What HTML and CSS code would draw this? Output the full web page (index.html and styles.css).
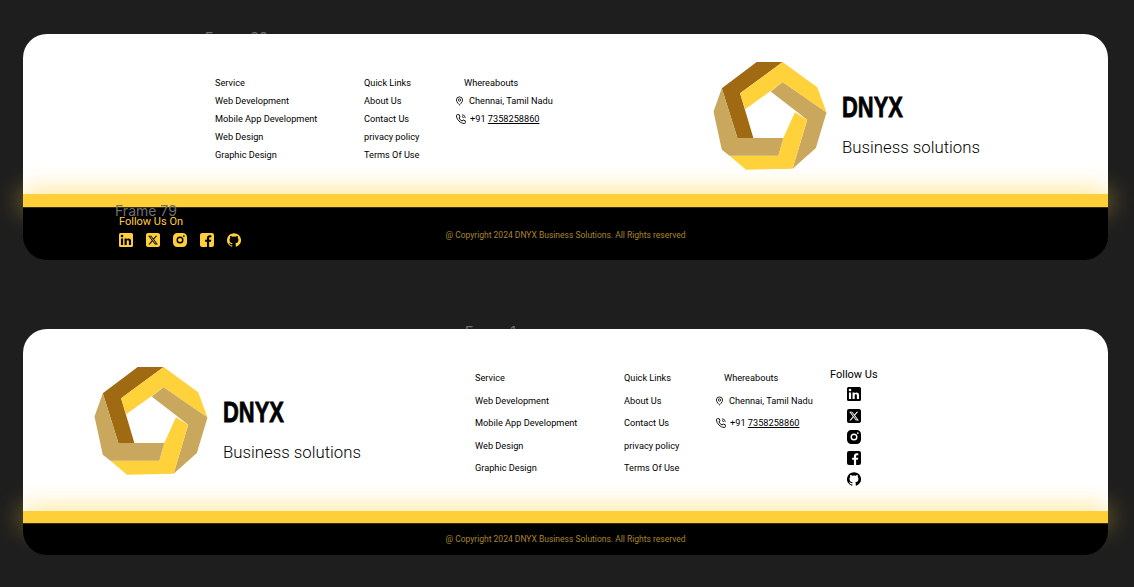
FILE: index.html
```html
<!DOCTYPE html>
<html lang="en">
<head>
    <meta charset="UTF-8">
    <meta name="viewport" content="width=device-width, initial-scale=1.0">
    <title>DNYX Footer Frames</title>
    <link rel="stylesheet" href="styles.css">
</head>
<body>

    <svg class="sprites" width="0" height="0" aria-hidden="true">
        <symbol id="logo" viewBox="30 30 360 340">
            <polygon fill="#a06a12" points="170,36 248,36 120,130 160,265 112,265 65,115"/>
            <polygon fill="#ffd23c" points="248,36 352,112 380,188 248,97 210,125 135,178 120,130"/>
            <polygon fill="#c9a75c" points="248,97 380,188 348,295 278,357 322,210 212,125"/>
            <polygon fill="#ffd23c" points="285,187 322,210 278,357 138,360 88,318 235,318 250,265"/>
            <polygon fill="#c9a75c" points="65,115 112,265 250,265 235,318 88,318 65,300 40,185"/>
        </symbol>
        <symbol id="ico-linkedin" viewBox="3 3 18 18">
            <path d="M19 3a2 2 0 0 1 2 2v14a2 2 0 0 1-2 2H5a2 2 0 0 1-2-2V5a2 2 0 0 1 2-2h14m-.5 15.5v-5.3a3.26 3.26 0 0 0-3.26-3.26c-.85 0-1.84.52-2.32 1.3v-1.11h-2.79v8.37h2.79v-4.93c0-.77.62-1.4 1.39-1.4a1.4 1.4 0 0 1 1.4 1.4v4.93h2.79M6.88 8.56a1.68 1.68 0 0 0 1.68-1.68c0-.93-.75-1.69-1.68-1.69a1.69 1.69 0 0 0-1.69 1.69c0 .93.76 1.68 1.69 1.68m1.39 9.94v-8.37H5.5v8.37h2.77z"/>
        </symbol>
        <symbol id="ico-x" viewBox="0 32 448 448">
            <path d="M64 32C28.7 32 0 60.7 0 96V416c0 35.3 28.7 64 64 64H384c35.3 0 64-28.7 64-64V96c0-35.3-28.7-64-64-64H64zm297.1 84L257.3 234.6 379.4 396H283.8L209 298.1 123.3 396H75.8l111-126.9L69.7 116h98l67.7 89.5L313.6 116h47.5zM323.3 367.6L153.4 142.9H125.1L296.9 367.6h26.3z"/>
        </symbol>
        <symbol id="ico-instagram" viewBox="2 2 20 20">
            <path fill-rule="evenodd" d="M8 2h8a6 6 0 0 1 6 6v8a6 6 0 0 1-6 6H8a6 6 0 0 1-6-6V8a6 6 0 0 1 6-6z M12 7a5 5 0 1 0 0 10 5 5 0 0 0 0-10z M12 9a3 3 0 1 1 0 6 3 3 0 0 1 0-6z M17.5 5.200a1.200 1.200 0 1 0 0 2.400 1.200 1.200 0 0 0 0-2.400z"/>
        </symbol>
        <symbol id="ico-facebook" viewBox="2 2 20 20">
            <path d="M5 2h14a3 3 0 0 1 3 3v14a3 3 0 0 1-3 3h-4v-7.5h2.600l.5-3H15V9.700c0-.9.4-1.600 1.700-1.600h1.500V5.400c-.5-.1-1.400-.2-2.300-.2-2.400 0-4 1.500-4 4.100v2.200H9.300v3h2.600V22H5a3 3 0 0 1-3-3V5a3 3 0 0 1 3-3z"/>
        </symbol>
        <symbol id="ico-github" viewBox="0 0 24 24">
            <path d="M12 .3a12 12 0 0 0-3.8 23.4c.6.1.8-.3.8-.6v-2c-3.3.7-4-1.6-4-1.6-.6-1.4-1.4-1.8-1.4-1.8-1-.7.1-.7.1-.7 1.2 0 1.9 1.2 1.9 1.2 1 1.8 2.8 1.3 3.5 1 0-.8.4-1.3.7-1.6-2.7-.3-5.5-1.3-5.5-6 0-1.2.5-2.3 1.3-3.1-.2-.4-.6-1.6 0-3.2 0 0 1-.3 3.4 1.2a11.5 11.5 0 0 1 6 0c2.3-1.5 3.3-1.2 3.3-1.2.6 1.6.2 2.8 0 3.2.9.8 1.3 1.9 1.3 3.2 0 4.6-2.8 5.6-5.5 5.9.5.4.9 1 .9 2.2v3.3c0 .3.1.7.8.6A12 12 0 0 0 12 .3"/>
        </symbol>
        <symbol id="ico-pin" viewBox="3 1 18 23">
            <path fill="none" stroke="#000" stroke-width="2.200" d="M12 2a8 8 0 0 0-8 8c0 5.500 8 12.500 8 12.500s8-7 8-12.500a8 8 0 0 0-8-8z"/>
            <circle cx="12" cy="10" r="3" fill="none" stroke="#000" stroke-width="2"/>
        </symbol>
        <symbol id="ico-phone" viewBox="1 1 22 22">
            <path fill="none" stroke="#000" stroke-width="2" stroke-linejoin="round" d="M4 2.500h4l2 5-2.500 2a13 13 0 0 0 7 7l2-2.500 5 2v4a2 2 0 0 1-2 2C10.500 21.500 2 13 2 4.500a2 2 0 0 1 2-2z"/>
            <path fill="none" stroke="#000" stroke-width="1.800" d="M14 2.500a8 8 0 0 1 7.500 7.500M14 6.500a4 4 0 0 1 3.500 3.500"/>
        </symbol>
    </svg>

    <!-- logo on the right -->
    <div class="frame frame-one">
        <span class="frame-label label-top">Frame 80</span>
        <div class="frame-main">
            <nav class="links">
                <ul class="col col-service">
                    <li>Service</li>
                    <li>Web Development</li>
                    <li>Mobile App Development</li>
                    <li>Web Design</li>
                    <li>Graphic Design</li>
                </ul>
                <ul class="col col-quick">
                    <li>Quick Links</li>
                    <li>About Us</li>
                    <li>Contact Us</li>
                    <li>privacy policy</li>
                    <li>Terms Of Use</li>
                </ul>
                <ul class="col col-where">
                    <li class="where-title">Whereabouts</li>
                    <li class="where-row"><svg class="pin"><use href="#ico-pin"/></svg>Chennai, Tamil Nadu</li>
                    <li class="where-row"><svg class="phone"><use href="#ico-phone"/></svg><span>+91 <u>7358258860</u></span></li>
                </ul>
            </nav>
            <div class="brand">
                <svg class="logo"><use href="#logo"/></svg>
                <div class="brand-text">
                    <div class="brand-name">DNYX</div>
                    <div class="brand-tag">Business solutions</div>
                </div>
            </div>
        </div>
        <div class="bar"></div>
        <footer class="frame-foot">
            <span class="frame-label label-foot">Frame 79</span>
            <div class="follow-on">
                <p>Follow Us On</p>
                <div class="socials">
                    <svg><use href="#ico-linkedin"/></svg>
                    <svg><use href="#ico-x"/></svg>
                    <svg><use href="#ico-instagram"/></svg>
                    <svg><use href="#ico-facebook"/></svg>
                    <svg><use href="#ico-github"/></svg>
                </div>
            </div>
            <p class="copyright">@ Copyright 2024 DNYX Business Solutions. All Rights reserved</p>
        </footer>
    </div>

    <!-- logo on the left -->
    <div class="frame frame-two">
        <span class="frame-label label-top">Frame 1</span>
        <div class="frame-main">
            <div class="brand">
                <svg class="logo"><use href="#logo"/></svg>
                <div class="brand-text">
                    <div class="brand-name">DNYX</div>
                    <div class="brand-tag">Business solutions</div>
                </div>
            </div>
            <nav class="links">
                <ul class="col col-service">
                    <li>Service</li>
                    <li>Web Development</li>
                    <li>Mobile App Development</li>
                    <li>Web Design</li>
                    <li>Graphic Design</li>
                </ul>
                <ul class="col col-quick">
                    <li>Quick Links</li>
                    <li>About Us</li>
                    <li>Contact Us</li>
                    <li>privacy policy</li>
                    <li>Terms Of Use</li>
                </ul>
                <ul class="col col-where">
                    <li class="where-title">Whereabouts</li>
                    <li class="where-row"><svg class="pin"><use href="#ico-pin"/></svg>Chennai, Tamil Nadu</li>
                    <li class="where-row"><svg class="phone"><use href="#ico-phone"/></svg><span>+91 <u>7358258860</u></span></li>
                </ul>
                <div class="follow-col">
                    <p>Follow Us</p>
                    <svg><use href="#ico-linkedin"/></svg>
                    <svg><use href="#ico-x"/></svg>
                    <svg><use href="#ico-instagram"/></svg>
                    <svg><use href="#ico-facebook"/></svg>
                    <svg><use href="#ico-github"/></svg>
                </div>
            </nav>
        </div>
        <div class="bar"></div>
        <footer class="frame-foot">
            <p class="copyright">@ Copyright 2024 DNYX Business Solutions. All Rights reserved</p>
        </footer>
    </div>

</body>
</html>
```

FILE: styles.css
```css
* {
    box-sizing: border-box;
}

body {
    font-family: Roboto, Lato, sans-serif;
    background-color: #1e1e1e;
    color: #000;
    margin: 0;
    padding: 34px 26px 0 23px;
    height: 587px;
    overflow: hidden;
    display: flex;
    flex-direction: column;
    gap: 69px;
}

p, ul {
    margin: 0;
    padding: 0;
    list-style: none;
}

.sprites {
    position: absolute;
}

.frame {
    position: relative;
    width: 1085px;
}

.frame-label {
    position: absolute;
    font-family: Inter, sans-serif;
    font-size: 14px;
    line-height: 17px;
    color: #6f6f6f;
    white-space: nowrap;
}

.frame-one .label-top {
    left: 182px;
    top: -5px;
}

.frame-two .label-top {
    left: 442px;
    top: -6px;
}

.label-foot {
    left: 92px;
    top: -6px;
}

.frame-main {
    position: relative;
    display: flex;
    background-color: #fff;
    border-radius: 24px 24px 0 0;
}

.frame-one .frame-main {
    height: 160px;
    padding-left: 192px;
}

.frame-two .frame-main {
    height: 182px;
    padding-left: 68px;
}

.bar {
    position: relative;
    background-color: #ffcf3a;
    box-shadow: 0 0 26px rgba(255, 207, 58, 0.9);
}

.frame-one .bar {
    height: 13px;
}

.frame-two .bar {
    height: 12px;
}

.frame-foot {
    position: relative;
    background-color: #000;
    border-top: 1px solid #3a2f10;
    border-radius: 0 0 24px 24px;
    display: grid;
    grid-template-columns: 1fr auto 1fr;
    align-items: center;
}

.frame-one .frame-foot {
    height: 53px;
}

.frame-two .frame-foot {
    height: 32px;
}

.copyright {
    grid-column: 2;
    color: #a8862c;
    font-size: 8.5px;
}

.frame-one .copyright {
    padding-top: 1px;
}

.frame-two .copyright {
    padding-bottom: 1px;
}

.follow-on {
    position: relative;
    grid-column: 1;
    align-self: start;
    margin: 7px 0 0 96px;
    color: #ffcf3a;
    font-size: 11px;
    line-height: 14px;
}

.socials {
    display: flex;
    gap: 13px;
    margin-top: 4px;
}

.socials svg {
    width: 14px;
    height: 14px;
    fill: #ffcf3a;
}

/* link columns */
.links {
    display: flex;
    padding-top: 43px;
    font-size: 9.2px;
    line-height: 12px;
}

.col {
    display: flex;
    flex-direction: column;
}

.frame-one .col {
    gap: 6px;
}

.frame-two .col {
    gap: 10.6px;
}

.col-service {
    width: 149px;
}

.col-quick {
    width: 92px;
}

.frame-one .col-where {
    width: 254px;
}

.frame-two .col-where {
    width: 114px;
}

.where-title {
    padding-left: 8px;
}

.where-row {
    display: flex;
    align-items: center;
    gap: 6px;
}

.pin {
    width: 7px;
    height: 10px;
}

.phone {
    width: 10px;
    height: 10px;
    margin-right: -2px;
}

.follow-col {
    display: flex;
    flex-direction: column;
    align-items: center;
    gap: 7.3px;
    margin-top: -3px;
}

.follow-col p {
    font-size: 11px;
    line-height: 11px;
}

.follow-col svg {
    width: 14px;
    height: 14px;
    fill: #000;
}

/* logo block */
.brand {
    display: flex;
    align-items: flex-start;
    gap: 12px;
    flex-shrink: 0;
}

.frame-one .brand {
    margin-top: 26px;
}

.frame-two .brand {
    margin-top: 36px;
    width: 384px;
}

.logo {
    width: 120px;
    height: 113px;
    flex-shrink: 0;
}

.brand-text {
    padding-top: 32px;
}

.brand-name {
    font-family: "Liberation Sans", sans-serif;
    font-weight: 700;
    font-size: 30px;
    line-height: 30px;
    width: 78px;
    transform: scaleX(0.73);
    transform-origin: left center;
    -webkit-text-stroke: 0.8px #000;
}

.brand-tag {
    font-size: 16.8px;
    font-weight: 300;
    line-height: 24px;
    margin-top: 13px;
    white-space: nowrap;
}
```
